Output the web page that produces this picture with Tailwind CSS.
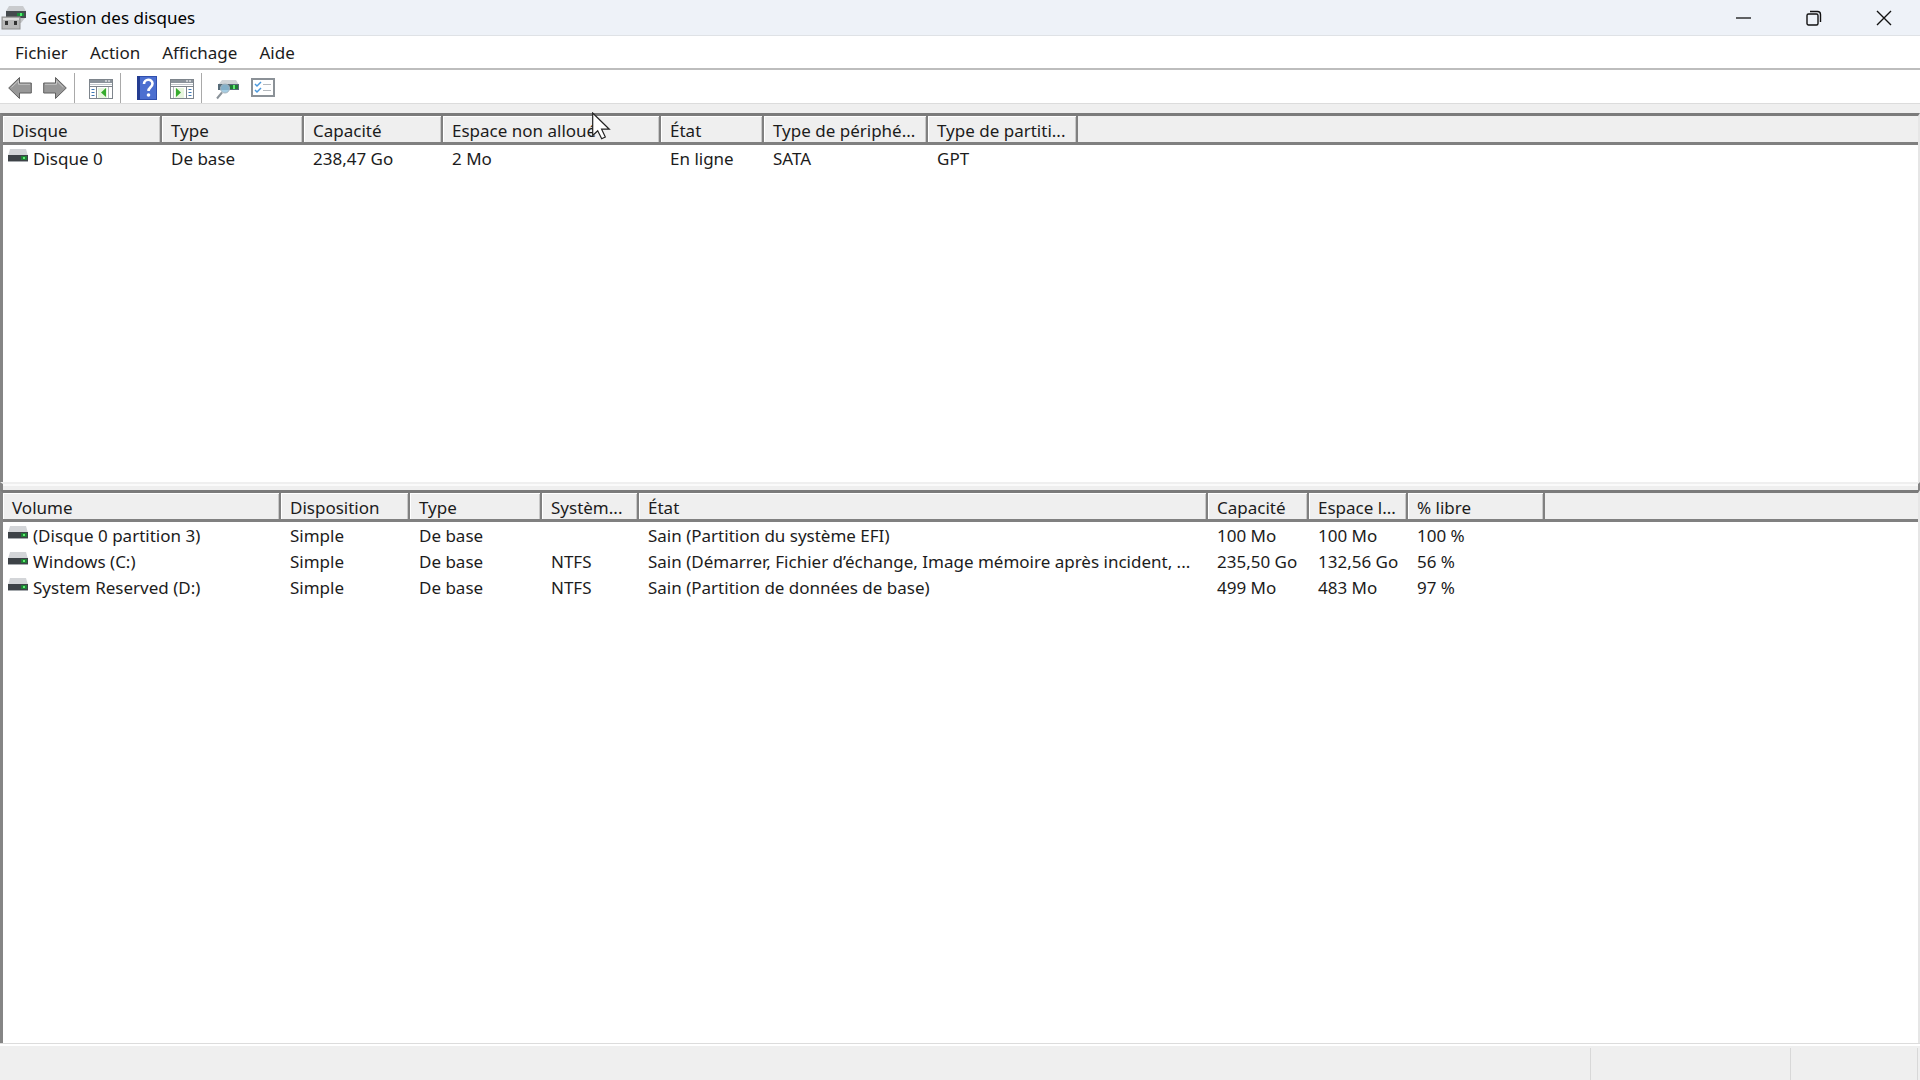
<!DOCTYPE html>
<html lang="fr">
<head>
  <meta charset="UTF-8" />
  <meta name="viewport" content="width=device-width, initial-scale=1.0" />
  <title>Gestion des disques</title>
  <script src="https://cdn.jsdelivr.net/npm/@tailwindcss/browser@4"></script>
</head>
<body class="h-screen flex flex-col overflow-hidden bg-white font-['Noto_Sans','Open_Sans',sans-serif] text-[17px] leading-6 text-[#1c1c1c]">

  <!-- Icône de disque partagée -->
  <svg class="hidden">
    <symbol id="disk" viewBox="0 0 20 13">
      <path d="M2 0h16l2 7H0z" fill="#d3d5d8" />
      <rect y="6" width="20" height="6" fill="#3d4247" />
      <rect y="12" width="20" height="1" fill="#a5a9ad" />
      <rect x="13" y="7" width="6" height="4" fill="#1f7d35" />
      <rect x="15" y="8" width="2" height="2" fill="#5df070" />
    </symbol>
  </svg>

  <!-- Barre de titre -->
  <header class="flex h-9 shrink-0 items-center justify-between border-b border-[#dfe2e6] bg-[#eef2f8] pr-px text-black">
    <div class="flex items-center gap-2">
      <svg class="h-6 w-[27px]" viewBox="0 0 27 24">
        <path d="M9 0h14l3 5H6z" fill="#c9cbce" />
        <rect x="6" y="5" width="20" height="7" fill="#454a4e" />
        <rect x="17" y="7" width="7" height="3" fill="#1b8a3a" />
        <rect x="20" y="7" width="2" height="3" fill="#4cf06c" />
        <path d="M8 12h17l-4 5H8z" fill="#c2c4c7" />
        <rect x="2" y="11" width="18" height="12" fill="#b9b9b9" stroke="#8f8f8f" />
        <path d="M3 12h16v2H3z" fill="#dcdcdc" />
        <rect x="5" y="15" width="3" height="4" fill="#333" />
        <rect x="14" y="15" width="3" height="4" fill="#333" />
      </svg>
      <h1>Gestion des disques</h1>
    </div>
    <div class="flex h-full">
      <button aria-label="Réduire" class="flex w-[70px] items-center justify-center">
        <svg class="size-4" viewBox="0 0 16 16" stroke="#111" stroke-width="1.3"><path d="M0 8h15" /></svg>
      </button>
      <button aria-label="Restaurer" class="flex w-[70px] items-center justify-center">
        <svg class="size-4" viewBox="0 0 16 16" fill="none" stroke="#111" stroke-width="1.4">
          <rect x="1" y="4" width="11" height="11" rx="1.5" />
          <path d="M4 1.500h7.500a3 3 0 0 1 3 3V12" />
        </svg>
      </button>
      <button aria-label="Fermer" class="flex w-[70px] items-center justify-center">
        <svg class="size-4" viewBox="0 0 16 16" stroke="#111" stroke-width="1.4"><path d="M1 1l14 14M15 1L1 15" /></svg>
      </button>
    </div>
  </header>

  <!-- Menus -->
  <nav class="flex h-[34px] shrink-0 items-center border-b-2 border-[#bdbdbd] pt-[2px] pl-1">
    <button class="px-[11px]">Fichier</button>
    <button class="px-[11px]">Action</button>
    <button class="px-[11px]">Affichage</button>
    <button class="px-[11px]">Aide</button>
  </nav>

  <!-- Barre d'outils -->
  <div class="flex h-[33px] shrink-0 items-center pt-[2px] pl-[2px]">
    <button aria-label="Précédent" class="flex w-[35px] justify-center">
      <svg class="size-6" viewBox="0 0 24 24"><path d="M.7 12L11.500 1.500v5.500H23.300v10H11.500v5.500z" fill="#989898" stroke="#5f5f5f" /><path d="M3.500 11.500L10.500 4.800v3.500H22" fill="none" stroke="#c4c4c4" /></svg>
    </button>
    <button aria-label="Suivant" class="flex w-[35px] justify-center">
      <svg class="size-6" viewBox="0 0 24 24"><path d="M23.300 12L12.500 1.500v5.500H.7v10h11.800v5.500z" fill="#989898" stroke="#5f5f5f" /><path d="M2 8.300h11.500V4.800l6.800 6.700" fill="none" stroke="#c4c4c4" /></svg>
    </button>
    <div class="mr-2 ml-[2px] h-[30px] w-px bg-[#a9a9a9]"></div>
    <button aria-label="Afficher ou masquer l'arborescence" class="flex w-[35px] justify-center">
      <svg class="size-6" viewBox="0 0 24 24">
        <rect x=".5" y="3.500" width="23" height="19" fill="#fff" stroke="#7e858c" />
        <rect x="1" y="4" width="22" height="3" fill="#8b939b" />
        <path d="M16 5h2M19 5h2" stroke="#fff" />
        <path d="M1 8.500h22" stroke="#c3c8cd" />
        <path d="M1 10.500h22M7.500 11v11" stroke="#7e858c" />
        <path d="M2.500 13.500h3M2.500 16.500h3M2.500 19.500h3" stroke="#3f79b5" />
        <rect x="9" y="12" width="9" height="10" fill="#e8f6df" />
        <path d="M17 12v9l-5-4.500z" fill="#35ab2c" />
        <path d="M19.500 11v11" stroke="#b3b8bd" />
      </svg>
    </button>
    <div class="mr-2 ml-[2px] h-[30px] w-px bg-[#a9a9a9]"></div>
    <button aria-label="Aide" class="flex w-[35px] justify-center">
      <svg class="size-6" viewBox="0 0 24 24">
        <rect x="2" y="0" width="20" height="24" fill="#2f4fae" />
        <rect x="5" y="1" width="16" height="22" fill="#4c6fd0" />
        <rect x="2" y="0" width="3" height="24" fill="#233c91" />
        <path d="M9 8c0-5.500 8.500-5.500 8.500-.5 0 4-4 3.500-4 7.500" fill="none" stroke="#fff" stroke-width="2.600" />
        <circle cx="13.500" cy="19" r="1.800" fill="#fff" />
      </svg>
    </button>
    <button aria-label="Afficher ou masquer le volet Actions" class="flex w-[35px] justify-center">
      <svg class="size-6" viewBox="0 0 24 24">
        <rect x=".5" y="3.500" width="23" height="19" fill="#fff" stroke="#7e858c" />
        <rect x="1" y="4" width="22" height="3" fill="#8b939b" />
        <path d="M16 5h2M19 5h2" stroke="#fff" />
        <path d="M1 8.500h22" stroke="#c3c8cd" />
        <path d="M1 10.500h22M16.500 11v11" stroke="#7e858c" />
        <path d="M18.500 13.500h3M18.500 16.500h3M18.500 19.500h3" stroke="#3f79b5" />
        <rect x="5" y="12" width="9" height="10" fill="#e8f6df" />
        <path d="M6 12v9l5-4.500z" fill="#35ab2c" />
        <path d="M3.500 11v11" stroke="#b3b8bd" />
      </svg>
    </button>
    <div class="mr-2 ml-[2px] h-[30px] w-px bg-[#a9a9a9]"></div>
    <button aria-label="Analyser les disques" class="flex w-[35px] justify-center">
      <svg class="size-6" viewBox="0 0 24 24">
        <path d="M6 4h14l3 5H2z" fill="#d0d4d7" />
        <rect x="2" y="8" width="21" height="6" fill="#566b78" />
        <rect x="14" y="9" width="8" height="4" fill="#1f7d35" />
        <rect x="17" y="9" width="2" height="4" fill="#5df070" />
        <circle cx="9" cy="12.500" r="4.500" fill="#8ec0dc" fill-opacity=".8" stroke="#a7b5be" />
        <path d="M6 16.500L1 22.500" stroke="#8a9299" stroke-width="2" />
      </svg>
    </button>
    <button aria-label="Propriétés" class="flex w-[35px] justify-center">
      <svg class="size-6" viewBox="0 0 24 24">
        <rect x="1" y="3" width="22" height="17" fill="#fff" stroke="#8b9197" stroke-width="2" />
        <path d="M4 8l2 2 4-4M4 14l2 2 4-4" fill="none" stroke="#4a98dc" stroke-width="1.500" />
        <path d="M12 8.500h8M12 14.500h8" stroke="#b4b9be" />
      </svg>
    </button>
  </div>

  <div class="h-[10px] shrink-0 border-t border-[#dcdcdc] bg-[#efefef]"></div>

  <!-- Liste des disques -->
  <section class="min-h-0 flex-2 overflow-hidden border-t-3 border-r-2 border-l-3 border-t-[#7b7b7b] border-r-[#e6e6e6] border-l-[#858585]">
    <table class="w-full table-fixed border-separate border-spacing-0 text-left whitespace-nowrap">
      <colgroup>
        <col class="w-[159px]" /><col class="w-[142px]" /><col class="w-[139px]" /><col class="w-[218px]" />
        <col class="w-[103px]" /><col class="w-[164px]" /><col class="w-[150px]" /><col />
      </colgroup>
      <thead class="bg-[#efefef] [&_th]:h-[29px] [&_th]:border-r-2 [&_th]:border-b-3 [&_th]:border-[#808080] [&_th]:pt-1 [&_th]:pb-0 [&_th]:pl-[9px] [&_th]:font-normal [&_th]:leading-5 [&_th]:shadow-[inset_1px_1px_0_#fff,inset_-1px_0_0_#c8c8c8]">
        <tr>
          <th>Disque</th><th>Type</th><th>Capacité</th><th>Espace non alloué</th><th>État</th>
          <th>Type de périphé...</th><th>Type de partiti...</th><td class="border-b-3 border-[#808080]"></td>
        </tr>
      </thead>
      <tbody class="[&_td]:h-[26px] [&_td]:p-0 [&_td]:pl-[9px]">
        <tr><td colspan="8" class="h-px!"></td></tr>
        <tr>
          <td class="pl-[5px]!"><div class="flex items-center gap-[5px]"><svg class="mb-2 h-[13px] w-5"><use href="#disk" /></svg>Disque 0</div></td>
          <td>De base</td><td>238,47 Go</td><td>2 Mo</td><td>En ligne</td><td>SATA</td><td>GPT</td><td></td>
        </tr>
      </tbody>
    </table>
  </section>

  <!-- Séparateur -->
  <div class="flex h-2 shrink-0 flex-col border-t-2 border-r-2 border-l-3 border-t-[#efefef] border-r-[#858585] border-l-[#858585] bg-[#efefef]">
    <div class="h-[2px] bg-[#fafafa]"></div>
  </div>

  <!-- Liste des volumes -->
  <section class="min-h-0 flex-3 overflow-hidden border-t-3 border-r-2 border-l-3 border-t-[#7b7b7b] border-r-[#e6e6e6] border-l-[#858585]">
    <table class="w-full table-fixed border-separate border-spacing-0 text-left whitespace-nowrap">
      <colgroup>
        <col class="w-[278px]" /><col class="w-[129px]" /><col class="w-[132px]" /><col class="w-[97px]" />
        <col class="w-[569px]" /><col class="w-[101px]" /><col class="w-[99px]" /><col class="w-[137px]" /><col />
      </colgroup>
      <thead class="bg-[#efefef] [&_th]:h-[29px] [&_th]:border-r-2 [&_th]:border-b-3 [&_th]:border-[#808080] [&_th]:pt-1 [&_th]:pb-0 [&_th]:pl-[9px] [&_th]:font-normal [&_th]:leading-5 [&_th]:shadow-[inset_1px_1px_0_#fff,inset_-1px_0_0_#c8c8c8]">
        <tr>
          <th>Volume</th><th>Disposition</th><th>Type</th><th>Systèm...</th><th>État</th>
          <th>Capacité</th><th>Espace l...</th><th>% libre</th><td class="border-b-3 border-[#808080]"></td>
        </tr>
      </thead>
      <tbody class="[&_td]:h-[26px] [&_td]:p-0 [&_td]:pl-[9px]">
        <tr><td colspan="9" class="h-px!"></td></tr>
        <tr>
          <td class="pl-[5px]!"><div class="flex items-center gap-[5px]"><svg class="mb-2 h-[13px] w-5"><use href="#disk" /></svg>(Disque 0 partition 3)</div></td>
          <td>Simple</td><td>De base</td><td></td><td>Sain (Partition du système EFI)</td><td>100 Mo</td><td>100 Mo</td><td>100 %</td><td></td>
        </tr>
        <tr>
          <td class="pl-[5px]!"><div class="flex items-center gap-[5px]"><svg class="mb-2 h-[13px] w-5"><use href="#disk" /></svg>Windows (C:)</div></td>
          <td>Simple</td><td>De base</td><td>NTFS</td><td>Sain (Démarrer, Fichier d’échange, Image mémoire après incident, ...</td><td>235,50 Go</td><td>132,56 Go</td><td>56 %</td><td></td>
        </tr>
        <tr>
          <td class="pl-[5px]!"><div class="flex items-center gap-[5px]"><svg class="mb-2 h-[13px] w-5"><use href="#disk" /></svg>System Reserved (D:)</div></td>
          <td>Simple</td><td>De base</td><td>NTFS</td><td>Sain (Partition de données de base)</td><td>499 Mo</td><td>483 Mo</td><td>97 %</td><td></td>
        </tr>
      </tbody>
    </table>
  </section>

  <!-- Barre d'état -->
  <footer class="flex h-[37px] shrink-0 justify-end border-t border-[#dcdcdc] bg-[#efefef] pr-[2px] shadow-[inset_0_2px_0_#fff]">
    <div class="mt-1 w-[200px] border-l border-[#d8d8d8]"></div>
    <div class="mt-1 w-32 border-x border-[#d8d8d8]"></div>
  </footer>

  <!-- Pointeur de souris -->
  <svg class="pointer-events-none absolute top-[112px] left-[592px] h-7 w-[19px]" viewBox="0 0 19 28">
    <path d="M.7 1v22.500l5-4.800 4 8 3.600-1.700-3.700-7.800h7.700z" fill="#fff" stroke="#222" stroke-width="1.200" />
  </svg>
</body>
</html>
